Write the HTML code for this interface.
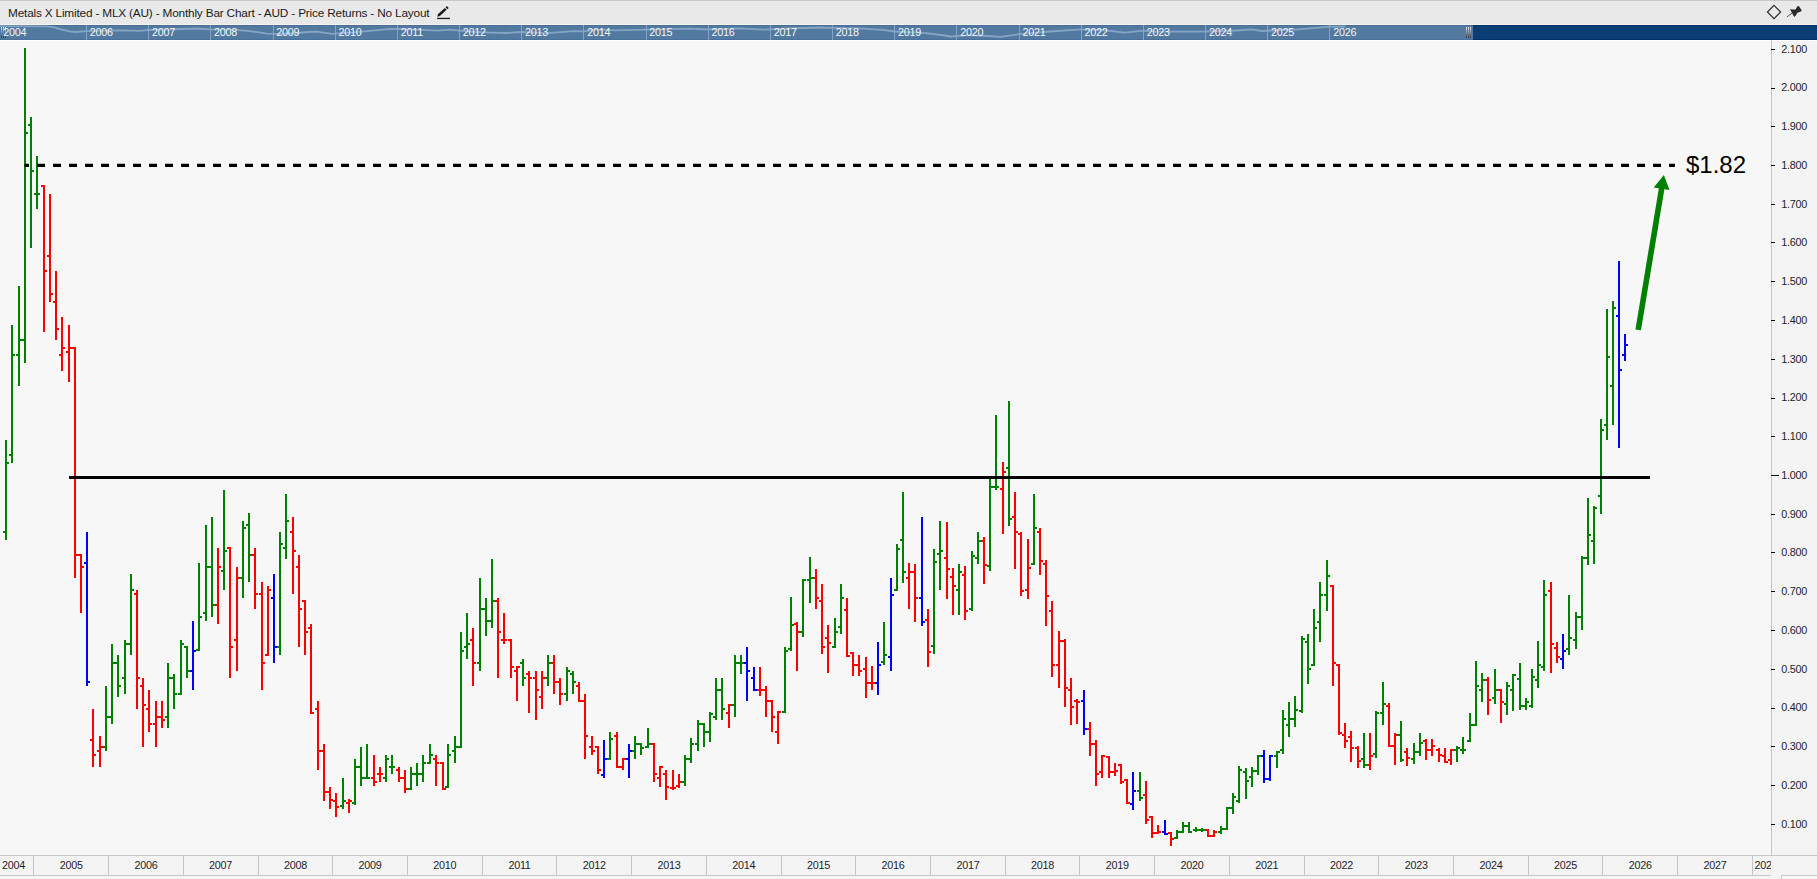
<!DOCTYPE html>
<html><head><meta charset="utf-8"><title>Metals X Limited - MLX (AU)</title>
<style>
html,body{margin:0;padding:0;}
body{width:1817px;height:879px;overflow:hidden;background:#f7f7f7;position:relative;font-family:"Liberation Sans",sans-serif;}
.abs{position:absolute;}
#topline{left:0;top:0;width:1817px;height:1px;background:#c9c9c9;}
#titlebar{left:0;top:1px;width:1817px;height:23px;background:#e9e9e9;}
#title{left:8px;top:6px;font-size:11.8px;line-height:15px;color:#1b1b1b;white-space:nowrap;letter-spacing:-0.18px;}
#tbline{left:0;top:24px;width:1817px;height:1px;background:#f7f3ec;}
#navl{left:0;top:25px;width:1473px;height:15px;background:#5279a0;box-shadow:inset 0 1px 0 #47709a, inset 0 -1px 0 #47709a;}
#navd{left:1473px;top:25px;width:344px;height:15px;background:#0b3e74;box-shadow:inset 0 1px 0 #013267, inset 0 -1px 0 #013267;}
#navw{left:0;top:40px;width:1817px;height:1px;background:#ffffff;}
#ypanel{left:1772px;top:41px;width:45px;height:838px;background:#f4f4f4;}
#xpanel{left:0;top:856px;width:1772px;height:23px;background:#f4f4f4;}
#botbox{left:1781px;top:875px;width:40px;height:10px;border:1px solid #c6c6c6;background:#f7f7f7;box-sizing:border-box;}
svg{position:absolute;left:0;top:0;}
svg text{font-family:"Liberation Sans",sans-serif;}
</style></head><body>
<div class="abs" id="topline"></div>
<div class="abs" id="titlebar"></div>
<div class="abs" id="title">Metals X Limited - MLX (AU) - Monthly Bar Chart - AUD - Price Returns - No Layout</div>
<div class="abs" id="tbline"></div>
<div class="abs" id="navl"></div>
<div class="abs" id="navd"></div>
<div class="abs" id="navw"></div>
<div class="abs" id="ypanel"></div>
<div class="abs" id="xpanel"></div>
<div class="abs" id="botbox"></div>
<svg width="1817" height="879" viewBox="0 0 1817 879">
<defs><linearGradient id="hg" x1="0" y1="0" x2="0" y2="1"><stop offset="0" stop-color="#e8eef5"/><stop offset="1" stop-color="#2a3440"/></linearGradient>
<clipPath id="xclip"><rect x="0" y="856" width="1771" height="20"/></clipPath></defs>
<g shape-rendering="crispEdges">
<rect x="1771" y="40" width="1" height="816" fill="#c6c6c6"/>
<rect x="0" y="855" width="1817" height="1" fill="#c6c6c6"/>
<rect x="0" y="875" width="1771" height="1" fill="#c6c6c6"/>
<rect x="33" y="856" width="1" height="19" fill="#c6c6c6"/><rect x="108" y="856" width="1" height="19" fill="#c6c6c6"/><rect x="183" y="856" width="1" height="19" fill="#c6c6c6"/><rect x="258" y="856" width="1" height="19" fill="#c6c6c6"/><rect x="332" y="856" width="1" height="19" fill="#c6c6c6"/><rect x="407" y="856" width="1" height="19" fill="#c6c6c6"/><rect x="482" y="856" width="1" height="19" fill="#c6c6c6"/><rect x="556" y="856" width="1" height="19" fill="#c6c6c6"/><rect x="631" y="856" width="1" height="19" fill="#c6c6c6"/><rect x="706" y="856" width="1" height="19" fill="#c6c6c6"/><rect x="781" y="856" width="1" height="19" fill="#c6c6c6"/><rect x="855" y="856" width="1" height="19" fill="#c6c6c6"/><rect x="930" y="856" width="1" height="19" fill="#c6c6c6"/><rect x="1005" y="856" width="1" height="19" fill="#c6c6c6"/><rect x="1079" y="856" width="1" height="19" fill="#c6c6c6"/><rect x="1154" y="856" width="1" height="19" fill="#c6c6c6"/><rect x="1229" y="856" width="1" height="19" fill="#c6c6c6"/><rect x="1304" y="856" width="1" height="19" fill="#c6c6c6"/><rect x="1378" y="856" width="1" height="19" fill="#c6c6c6"/><rect x="1453" y="856" width="1" height="19" fill="#c6c6c6"/><rect x="1528" y="856" width="1" height="19" fill="#c6c6c6"/><rect x="1602" y="856" width="1" height="19" fill="#c6c6c6"/><rect x="1677" y="856" width="1" height="19" fill="#c6c6c6"/><rect x="1752" y="856" width="1" height="19" fill="#c6c6c6"/>
<rect x="1771" y="824" width="4" height="1" fill="#111"/><rect x="1771" y="785" width="4" height="1" fill="#111"/><rect x="1771" y="746" width="4" height="1" fill="#111"/><rect x="1771" y="708" width="4" height="1" fill="#111"/><rect x="1771" y="669" width="4" height="1" fill="#111"/><rect x="1771" y="630" width="4" height="1" fill="#111"/><rect x="1771" y="591" width="4" height="1" fill="#111"/><rect x="1771" y="552" width="4" height="1" fill="#111"/><rect x="1771" y="514" width="4" height="1" fill="#111"/><rect x="1771" y="475" width="8" height="1" fill="#111"/><rect x="1771" y="436" width="4" height="1" fill="#111"/><rect x="1771" y="398" width="4" height="1" fill="#111"/><rect x="1771" y="359" width="4" height="1" fill="#111"/><rect x="1771" y="320" width="4" height="1" fill="#111"/><rect x="1771" y="281" width="4" height="1" fill="#111"/><rect x="1771" y="242" width="4" height="1" fill="#111"/><rect x="1771" y="204" width="4" height="1" fill="#111"/><rect x="1771" y="165" width="4" height="1" fill="#111"/><rect x="1771" y="126" width="4" height="1" fill="#111"/><rect x="1771" y="88" width="4" height="1" fill="#111"/><rect x="1771" y="49" width="4" height="1" fill="#111"/>
<rect x="86" y="25" width="1" height="15" fill="#86a2c0"/><rect x="148" y="25" width="1" height="15" fill="#86a2c0"/><rect x="210" y="25" width="1" height="15" fill="#86a2c0"/><rect x="273" y="25" width="1" height="15" fill="#86a2c0"/><rect x="335" y="25" width="1" height="15" fill="#86a2c0"/><rect x="397" y="25" width="1" height="15" fill="#86a2c0"/><rect x="459" y="25" width="1" height="15" fill="#86a2c0"/><rect x="521" y="25" width="1" height="15" fill="#86a2c0"/><rect x="583" y="25" width="1" height="15" fill="#86a2c0"/><rect x="646" y="25" width="1" height="15" fill="#86a2c0"/><rect x="708" y="25" width="1" height="15" fill="#86a2c0"/><rect x="770" y="25" width="1" height="15" fill="#86a2c0"/><rect x="832" y="25" width="1" height="15" fill="#86a2c0"/><rect x="894" y="25" width="1" height="15" fill="#86a2c0"/><rect x="956" y="25" width="1" height="15" fill="#86a2c0"/><rect x="1019" y="25" width="1" height="15" fill="#86a2c0"/><rect x="1081" y="25" width="1" height="15" fill="#86a2c0"/><rect x="1143" y="25" width="1" height="15" fill="#86a2c0"/><rect x="1205" y="25" width="1" height="15" fill="#86a2c0"/><rect x="1267" y="25" width="1" height="15" fill="#86a2c0"/><rect x="1329" y="25" width="1" height="15" fill="#86a2c0"/>
<rect x="1466" y="27" width="1" height="11" fill="url(#hg)"/><rect x="1468" y="27" width="1" height="11" fill="url(#hg)"/><rect x="1470" y="27" width="1" height="11" fill="url(#hg)"/>
<rect x="1" y="27" width="1" height="11" fill="url(#hg)"/><rect x="3" y="27" width="1" height="11" fill="url(#hg)"/><rect x="5" y="27" width="1" height="11" fill="url(#hg)"/>
</g>
<polyline points="-1.8,26.2 46.7,26.3 54.2,27.4 61.6,29.6 69.7,31.4 75.9,32.0 86.5,31.2 105.2,30.6 123.8,30.4 139.3,30.8 148.7,30.0 167.3,29.6 182.9,29.0 195.3,28.5 210.8,29.4 229.5,29.6 245.0,30.6 257.5,32.2 266.8,33.6 279.2,34.0 297.9,33.0 307.2,32.0 316.5,31.7 332.1,33.8 341.4,33.2 353.8,32.4 372.5,30.6 391.1,28.8 397.4,29.0 416.0,29.6 437.8,30.6 450.2,29.6 459.5,30.6 475.1,32.0 490.6,32.6 506.1,33.0 521.7,32.0 546.6,33.2 574.5,31.2 583.9,31.4 596.3,29.6 614.9,30.3 646.0,29.6 670.9,29.2 689.5,28.6 708.2,29.5 739.3,28.3 764.2,29.7 789.0,28.5 820.1,27.5 832.5,27.8 863.6,28.6 882.3,29.8 894.7,31.5 925.8,33.1 941.3,35.0 950.7,36.5 969.3,35.2 988.0,36.0 1000.4,36.8 1019.1,34.2 1050.1,31.5 1081.2,29.3 1106.1,30.5 1124.7,32.7 1143.4,30.6 1155.8,31.6 1205.6,31.5 1236.6,30.5 1252.2,29.4 1261.5,31.0 1270.8,30.5 1298.8,29.3 1329.9,26.6 1345.4,26.5" fill="none" stroke="#8ca8c6" stroke-width="1.8" stroke-linejoin="round" opacity="0.9"/>
<g font-size="10.8" letter-spacing="-0.25" fill="#f4f7fa"><text x="89.8" y="36.3">2006</text><text x="152.0" y="36.3">2007</text><text x="214.1" y="36.3">2008</text><text x="276.3" y="36.3">2009</text><text x="338.5" y="36.3">2010</text><text x="400.7" y="36.3">2011</text><text x="462.8" y="36.3">2012</text><text x="525.0" y="36.3">2013</text><text x="587.2" y="36.3">2014</text><text x="649.3" y="36.3">2015</text><text x="711.5" y="36.3">2016</text><text x="773.7" y="36.3">2017</text><text x="835.8" y="36.3">2018</text><text x="898.0" y="36.3">2019</text><text x="960.2" y="36.3">2020</text><text x="1022.4" y="36.3">2021</text><text x="1084.5" y="36.3">2022</text><text x="1146.7" y="36.3">2023</text><text x="1208.9" y="36.3">2024</text><text x="1271.0" y="36.3">2025</text><text x="1333.2" y="36.3">2026</text><text x="3.2" y="36.3">2004</text></g>
<g font-size="10.8" letter-spacing="-0.25" fill="#1d1d2b"><text x="1807" y="827.6" text-anchor="end">0.100</text><text x="1807" y="788.9" text-anchor="end">0.200</text><text x="1807" y="750.1" text-anchor="end">0.300</text><text x="1807" y="711.4" text-anchor="end">0.400</text><text x="1807" y="672.6" text-anchor="end">0.500</text><text x="1807" y="633.9" text-anchor="end">0.600</text><text x="1807" y="595.1" text-anchor="end">0.700</text><text x="1807" y="556.4" text-anchor="end">0.800</text><text x="1807" y="517.6" text-anchor="end">0.900</text><text x="1807" y="478.9" text-anchor="end">1.000</text><text x="1807" y="440.1" text-anchor="end">1.100</text><text x="1807" y="401.4" text-anchor="end">1.200</text><text x="1807" y="362.6" text-anchor="end">1.300</text><text x="1807" y="323.9" text-anchor="end">1.400</text><text x="1807" y="285.1" text-anchor="end">1.500</text><text x="1807" y="246.4" text-anchor="end">1.600</text><text x="1807" y="207.7" text-anchor="end">1.700</text><text x="1807" y="168.9" text-anchor="end">1.800</text><text x="1807" y="130.2" text-anchor="end">1.900</text><text x="1807" y="91.4" text-anchor="end">2.000</text><text x="1807" y="52.6" text-anchor="end">2.100</text></g>
<g font-size="10.8" letter-spacing="-0.25" fill="#1d1d2b" clip-path="url(#xclip)"><text x="71.2" y="869" text-anchor="middle">2005</text><text x="145.9" y="869" text-anchor="middle">2006</text><text x="220.6" y="869" text-anchor="middle">2007</text><text x="295.4" y="869" text-anchor="middle">2008</text><text x="370.1" y="869" text-anchor="middle">2009</text><text x="444.8" y="869" text-anchor="middle">2010</text><text x="519.5" y="869" text-anchor="middle">2011</text><text x="594.2" y="869" text-anchor="middle">2012</text><text x="669.0" y="869" text-anchor="middle">2013</text><text x="743.7" y="869" text-anchor="middle">2014</text><text x="818.4" y="869" text-anchor="middle">2015</text><text x="893.1" y="869" text-anchor="middle">2016</text><text x="967.9" y="869" text-anchor="middle">2017</text><text x="1042.6" y="869" text-anchor="middle">2018</text><text x="1117.3" y="869" text-anchor="middle">2019</text><text x="1192.0" y="869" text-anchor="middle">2020</text><text x="1266.7" y="869" text-anchor="middle">2021</text><text x="1341.4" y="869" text-anchor="middle">2022</text><text x="1416.2" y="869" text-anchor="middle">2023</text><text x="1490.9" y="869" text-anchor="middle">2024</text><text x="1565.6" y="869" text-anchor="middle">2025</text><text x="1640.3" y="869" text-anchor="middle">2026</text><text x="1715.0" y="869" text-anchor="middle">2027</text><text x="2" y="869">2004</text><text x="1754.4" y="869">2028</text></g>
<g shape-rendering="crispEdges"><path fill="#008000" d="M5 440h2V540h-2zM3 531h2v2h-2zM7 462h2v2h-2zM11 325h2V463h-2zM9 454h2v2h-2zM13 354h2v2h-2zM18 286h2V386h-2zM16 354h2v2h-2zM20 339h2v2h-2zM24 48h2V363h-2zM22 339h2v2h-2zM26 132h2v2h-2zM30 117h2V248h-2zM28 124h2v2h-2zM32 170h2v2h-2zM36 156h2V209h-2zM34 193h2v2h-2zM38 193h2v2h-2zM105 686h2V751h-2zM103 746h2v2h-2zM107 716h2v2h-2zM111 644h2V724h-2zM109 716h2v2h-2zM113 662h2v2h-2zM117 655h2V697h-2zM115 662h2v2h-2zM119 685h2v2h-2zM124 640h2V694h-2zM122 677h2v2h-2zM126 643h2v2h-2zM130 574h2V655h-2zM128 643h2v2h-2zM132 589h2v2h-2zM167 663h2V728h-2zM165 716h2v2h-2zM169 677h2v2h-2zM173 674h2V709h-2zM171 677h2v2h-2zM175 693h2v2h-2zM180 640h2V695h-2zM178 693h2v2h-2zM182 643h2v2h-2zM186 646h2V678h-2zM184 646h2v2h-2zM188 670h2v2h-2zM198 563h2V651h-2zM196 649h2v2h-2zM200 616h2v2h-2zM205 525h2V621h-2zM203 612h2v2h-2zM207 566h2v2h-2zM211 517h2V617h-2zM209 566h2v2h-2zM213 604h2v2h-2zM223 490h2V590h-2zM221 570h2v2h-2zM225 550h2v2h-2zM242 521h2V598h-2zM240 577h2v2h-2zM244 527h2v2h-2zM248 513h2V582h-2zM246 524h2v2h-2zM250 554h2v2h-2zM279 532h2V655h-2zM277 646h2v2h-2zM281 543h2v2h-2zM285 494h2V559h-2zM283 547h2v2h-2zM287 520h2v2h-2zM342 778h2V809h-2zM340 805h2v2h-2zM344 800h2v2h-2zM354 759h2V805h-2zM352 802h2v2h-2zM356 766h2v2h-2zM360 747h2V786h-2zM358 766h2v2h-2zM362 777h2v2h-2zM366 744h2V779h-2zM364 777h2v2h-2zM368 777h2v2h-2zM385 755h2V782h-2zM383 777h2v2h-2zM387 758h2v2h-2zM391 755h2V774h-2zM389 766h2v2h-2zM393 766h2v2h-2zM410 767h2V790h-2zM408 788h2v2h-2zM412 773h2v2h-2zM416 763h2V786h-2zM414 773h2v2h-2zM418 773h2v2h-2zM422 755h2V782h-2zM420 773h2v2h-2zM424 762h2v2h-2zM429 744h2V764h-2zM427 762h2v2h-2zM431 754h2v2h-2zM447 744h2V788h-2zM445 786h2v2h-2zM449 754h2v2h-2zM454 736h2V763h-2zM452 750h2v2h-2zM456 746h2v2h-2zM460 632h2V748h-2zM458 746h2v2h-2zM462 650h2v2h-2zM466 613h2V659h-2zM464 646h2v2h-2zM468 643h2v2h-2zM479 578h2V671h-2zM477 662h2v2h-2zM481 608h2v2h-2zM485 598h2V636h-2zM483 608h2v2h-2zM487 620h2v2h-2zM491 559h2V628h-2zM489 620h2v2h-2zM493 600h2v2h-2zM522 659h2V686h-2zM520 662h2v2h-2zM524 677h2v2h-2zM547 655h2V686h-2zM545 677h2v2h-2zM549 662h2v2h-2zM566 667h2V701h-2zM564 693h2v2h-2zM568 670h2v2h-2zM572 671h2V694h-2zM570 673h2v2h-2zM574 681h2v2h-2zM609 732h2V760h-2zM607 758h2v2h-2zM611 738h2v2h-2zM634 736h2V759h-2zM632 750h2v2h-2zM636 743h2v2h-2zM640 743h2V755h-2zM638 743h2v2h-2zM642 747h2v2h-2zM647 728h2V748h-2zM645 746h2v2h-2zM649 743h2v2h-2zM684 755h2V786h-2zM682 781h2v2h-2zM686 758h2v2h-2zM690 738h2V763h-2zM688 758h2v2h-2zM692 743h2v2h-2zM697 720h2V751h-2zM695 743h2v2h-2zM699 723h2v2h-2zM703 723h2V747h-2zM701 723h2v2h-2zM705 731h2v2h-2zM709 712h2V742h-2zM707 731h2v2h-2zM711 713h2v2h-2zM715 678h2V720h-2zM713 716h2v2h-2zM717 689h2v2h-2zM721 678h2V720h-2zM719 689h2v2h-2zM723 708h2v2h-2zM734 655h2V717h-2zM732 704h2v2h-2zM736 662h2v2h-2zM740 655h2V674h-2zM738 662h2v2h-2zM742 662h2v2h-2zM784 647h2V713h-2zM782 711h2v2h-2zM786 650h2v2h-2zM790 597h2V651h-2zM788 648h2v2h-2zM792 624h2v2h-2zM802 579h2V637h-2zM800 631h2v2h-2zM804 579h2v2h-2zM809 557h2V603h-2zM807 579h2v2h-2zM811 577h2v2h-2zM834 618h2V648h-2zM832 646h2v2h-2zM836 631h2v2h-2zM840 584h2V634h-2zM838 626h2v2h-2zM842 597h2v2h-2zM883 622h2V665h-2zM881 661h2v2h-2zM885 654h2v2h-2zM896 544h2V591h-2zM894 589h2v2h-2zM898 548h2v2h-2zM902 492h2V583h-2zM900 539h2v2h-2zM904 571h2v2h-2zM933 549h2V654h-2zM931 645h2v2h-2zM935 561h2v2h-2zM939 521h2V590h-2zM937 553h2v2h-2zM941 550h2v2h-2zM958 564h2V615h-2zM956 589h2v2h-2zM960 571h2v2h-2zM971 551h2V611h-2zM969 608h2v2h-2zM973 555h2v2h-2zM977 532h2V564h-2zM975 557h2v2h-2zM979 540h2v2h-2zM989 479h2V571h-2zM987 565h2v2h-2zM991 486h2v2h-2zM995 415h2V490h-2zM993 486h2v2h-2zM997 486h2v2h-2zM1008 401h2V526h-2zM1006 467h2v2h-2zM1010 518h2v2h-2zM1033 494h2V565h-2zM1031 563h2v2h-2zM1035 527h2v2h-2zM1139 772h2V801h-2zM1137 790h2v2h-2zM1141 797h2v2h-2zM1176 830h2V839h-2zM1174 837h2v2h-2zM1178 831h2v2h-2zM1182 822h2V833h-2zM1180 831h2v2h-2zM1184 825h2v2h-2zM1188 822h2V833h-2zM1186 825h2v2h-2zM1190 831h2v2h-2zM1195 827h2V832h-2zM1193 829h2v2h-2zM1197 829h2v2h-2zM1201 828h2V832h-2zM1199 829h2v2h-2zM1203 829h2v2h-2zM1220 826h2V834h-2zM1218 831h2v2h-2zM1222 828h2v2h-2zM1226 807h2V830h-2zM1224 828h2v2h-2zM1228 807h2v2h-2zM1232 793h2V814h-2zM1230 807h2v2h-2zM1234 796h2v2h-2zM1238 766h2V803h-2zM1236 800h2v2h-2zM1240 769h2v2h-2zM1245 768h2V799h-2zM1243 771h2v2h-2zM1247 780h2v2h-2zM1251 767h2V787h-2zM1249 776h2v2h-2zM1253 770h2v2h-2zM1257 755h2V775h-2zM1255 770h2v2h-2zM1259 755h2v2h-2zM1276 751h2V768h-2zM1274 755h2v2h-2zM1278 751h2v2h-2zM1282 710h2V754h-2zM1280 749h2v2h-2zM1284 718h2v2h-2zM1288 702h2V737h-2zM1286 724h2v2h-2zM1290 718h2v2h-2zM1294 696h2V727h-2zM1292 718h2v2h-2zM1296 709h2v2h-2zM1301 636h2V713h-2zM1299 710h2v2h-2zM1303 638h2v2h-2zM1307 634h2V684h-2zM1305 641h2v2h-2zM1309 668h2v2h-2zM1313 609h2V666h-2zM1311 664h2v2h-2zM1315 627h2v2h-2zM1319 582h2V642h-2zM1317 621h2v2h-2zM1321 594h2v2h-2zM1326 560h2V611h-2zM1324 594h2v2h-2zM1328 575h2v2h-2zM1363 733h2V768h-2zM1361 758h2v2h-2zM1365 764h2v2h-2zM1375 711h2V758h-2zM1373 753h2v2h-2zM1377 712h2v2h-2zM1382 682h2V725h-2zM1380 712h2v2h-2zM1384 703h2v2h-2zM1400 721h2V762h-2zM1398 734h2v2h-2zM1402 759h2v2h-2zM1413 743h2V764h-2zM1411 758h2v2h-2zM1415 751h2v2h-2zM1419 733h2V756h-2zM1417 751h2v2h-2zM1421 742h2v2h-2zM1456 746h2V762h-2zM1454 749h2v2h-2zM1458 747h2v2h-2zM1462 737h2V754h-2zM1460 749h2v2h-2zM1464 749h2v2h-2zM1469 713h2V742h-2zM1467 740h2v2h-2zM1471 724h2v2h-2zM1475 661h2V726h-2zM1473 724h2v2h-2zM1477 685h2v2h-2zM1481 673h2V702h-2zM1479 689h2v2h-2zM1483 679h2v2h-2zM1494 669h2V704h-2zM1492 697h2v2h-2zM1496 689h2v2h-2zM1506 682h2V715h-2zM1504 703h2v2h-2zM1508 685h2v2h-2zM1512 674h2V711h-2zM1510 689h2v2h-2zM1514 674h2v2h-2zM1519 663h2V710h-2zM1517 678h2v2h-2zM1521 705h2v2h-2zM1525 698h2V710h-2zM1523 705h2v2h-2zM1527 701h2v2h-2zM1531 669h2V708h-2zM1529 705h2v2h-2zM1533 676h2v2h-2zM1537 641h2V688h-2zM1535 679h2v2h-2zM1539 664h2v2h-2zM1543 580h2V671h-2zM1541 666h2v2h-2zM1545 594h2v2h-2zM1568 595h2V655h-2zM1566 648h2v2h-2zM1570 637h2v2h-2zM1575 612h2V649h-2zM1573 639h2v2h-2zM1577 616h2v2h-2zM1581 556h2V630h-2zM1579 616h2v2h-2zM1583 557h2v2h-2zM1587 498h2V565h-2zM1585 557h2v2h-2zM1589 534h2v2h-2zM1593 506h2V564h-2zM1591 540h2v2h-2zM1595 507h2v2h-2zM1600 419h2V514h-2zM1598 495h2v2h-2zM1602 429h2v2h-2zM1606 309h2V440h-2zM1604 424h2v2h-2zM1608 356h2v2h-2zM1612 301h2V425h-2zM1610 385h2v2h-2zM1614 307h2v2h-2z"/><path fill="#ff0000" d="M43 185h2V332h-2zM41 185h2v2h-2zM45 270h2v2h-2zM49 194h2V302h-2zM47 255h2v2h-2zM51 293h2v2h-2zM55 271h2V340h-2zM53 301h2v2h-2zM57 328h2v2h-2zM61 317h2V371h-2zM59 354h2v2h-2zM63 347h2v2h-2zM68 325h2V382h-2zM66 351h2v2h-2zM70 347h2v2h-2zM74 347h2V578h-2zM72 347h2v2h-2zM76 554h2v2h-2zM80 554h2V613h-2zM78 554h2v2h-2zM82 566h2v2h-2zM92 709h2V767h-2zM90 739h2v2h-2zM94 754h2v2h-2zM99 736h2V767h-2zM97 750h2v2h-2zM101 746h2v2h-2zM136 590h2V709h-2zM134 593h2v2h-2zM138 677h2v2h-2zM142 678h2V747h-2zM140 685h2v2h-2zM144 704h2v2h-2zM148 690h2V732h-2zM146 708h2v2h-2zM150 723h2v2h-2zM155 701h2V747h-2zM153 723h2v2h-2zM157 716h2v2h-2zM161 701h2V728h-2zM159 716h2v2h-2zM163 719h2v2h-2zM217 548h2V624h-2zM215 604h2v2h-2zM219 566h2v2h-2zM229 547h2V678h-2zM227 547h2v2h-2zM231 646h2v2h-2zM236 567h2V671h-2zM234 639h2v2h-2zM238 577h2v2h-2zM254 548h2V609h-2zM252 554h2v2h-2zM256 593h2v2h-2zM261 582h2V690h-2zM259 593h2v2h-2zM263 662h2v2h-2zM267 586h2V656h-2zM265 654h2v2h-2zM269 589h2v2h-2zM292 517h2V594h-2zM290 531h2v2h-2zM294 550h2v2h-2zM298 555h2V647h-2zM296 566h2v2h-2zM300 608h2v2h-2zM304 600h2V655h-2zM302 600h2v2h-2zM306 631h2v2h-2zM310 624h2V714h-2zM308 627h2v2h-2zM312 712h2v2h-2zM317 701h2V770h-2zM315 708h2v2h-2zM319 750h2v2h-2zM323 744h2V801h-2zM321 750h2v2h-2zM325 791h2v2h-2zM329 787h2V809h-2zM327 791h2v2h-2zM331 799h2v2h-2zM335 793h2V817h-2zM333 800h2v2h-2zM337 806h2v2h-2zM348 799h2V813h-2zM346 802h2v2h-2zM350 800h2v2h-2zM373 755h2V786h-2zM371 777h2v2h-2zM375 781h2v2h-2zM379 767h2V782h-2zM377 773h2v2h-2zM381 773h2v2h-2zM398 767h2V782h-2zM396 769h2v2h-2zM400 777h2v2h-2zM404 770h2V793h-2zM402 777h2v2h-2zM406 788h2v2h-2zM435 755h2V786h-2zM433 758h2v2h-2zM437 762h2v2h-2zM442 762h2V790h-2zM440 762h2v2h-2zM444 788h2v2h-2zM472 628h2V686h-2zM470 639h2v2h-2zM474 662h2v2h-2zM497 598h2V678h-2zM495 600h2v2h-2zM499 631h2v2h-2zM503 613h2V644h-2zM501 639h2v2h-2zM505 639h2v2h-2zM510 639h2V678h-2zM508 639h2v2h-2zM512 666h2v2h-2zM516 666h2V701h-2zM514 670h2v2h-2zM518 666h2v2h-2zM528 671h2V713h-2zM526 673h2v2h-2zM530 677h2v2h-2zM535 671h2V720h-2zM533 677h2v2h-2zM537 689h2v2h-2zM541 671h2V709h-2zM539 696h2v2h-2zM543 677h2v2h-2zM553 655h2V694h-2zM551 662h2v2h-2zM555 681h2v2h-2zM559 678h2V705h-2zM557 681h2v2h-2zM561 693h2v2h-2zM578 682h2V702h-2zM576 685h2v2h-2zM580 700h2v2h-2zM584 694h2V759h-2zM582 700h2v2h-2zM586 735h2v2h-2zM591 736h2V755h-2zM589 746h2v2h-2zM593 750h2v2h-2zM597 746h2V774h-2zM595 746h2v2h-2zM599 769h2v2h-2zM616 732h2V768h-2zM614 735h2v2h-2zM618 766h2v2h-2zM622 758h2V770h-2zM620 766h2v2h-2zM624 758h2v2h-2zM653 743h2V782h-2zM651 743h2v2h-2zM655 773h2v2h-2zM659 766h2V787h-2zM657 777h2v2h-2zM661 766h2v2h-2zM665 770h2V800h-2zM663 773h2v2h-2zM667 786h2v2h-2zM672 770h2V790h-2zM670 787h2v2h-2zM674 787h2v2h-2zM678 774h2V788h-2zM676 785h2v2h-2zM680 781h2v2h-2zM728 704h2V728h-2zM726 712h2v2h-2zM730 704h2v2h-2zM759 667h2V696h-2zM757 689h2v2h-2zM761 689h2v2h-2zM765 686h2V717h-2zM763 689h2v2h-2zM767 700h2v2h-2zM771 700h2V732h-2zM769 700h2v2h-2zM773 716h2v2h-2zM777 711h2V744h-2zM775 731h2v2h-2zM779 711h2v2h-2zM796 622h2V671h-2zM794 623h2v2h-2zM798 631h2v2h-2zM815 569h2V609h-2zM813 577h2v2h-2zM817 597h2v2h-2zM821 584h2V654h-2zM819 600h2v2h-2zM823 646h2v2h-2zM827 625h2V673h-2zM825 637h2v2h-2zM829 642h2v2h-2zM846 598h2V657h-2zM844 609h2v2h-2zM848 655h2v2h-2zM852 652h2V676h-2zM850 652h2v2h-2zM854 664h2v2h-2zM858 655h2V676h-2zM856 664h2v2h-2zM860 670h2v2h-2zM865 657h2V698h-2zM863 668h2v2h-2zM867 682h2v2h-2zM871 666h2V690h-2zM869 682h2v2h-2zM873 682h2v2h-2zM908 563h2V609h-2zM906 577h2v2h-2zM910 571h2v2h-2zM914 564h2V622h-2zM912 571h2v2h-2zM916 597h2v2h-2zM927 609h2V667h-2zM925 619h2v2h-2zM929 651h2v2h-2zM946 522h2V599h-2zM944 557h2v2h-2zM948 568h2v2h-2zM952 568h2V615h-2zM950 576h2v2h-2zM954 585h2v2h-2zM964 566h2V620h-2zM962 574h2v2h-2zM966 610h2v2h-2zM983 537h2V584h-2zM981 540h2v2h-2zM985 564h2v2h-2zM1002 462h2V534h-2zM1000 488h2v2h-2zM1004 471h2v2h-2zM1014 492h2V569h-2zM1012 516h2v2h-2zM1016 531h2v2h-2zM1020 532h2V596h-2zM1018 533h2v2h-2zM1022 590h2v2h-2zM1027 539h2V599h-2zM1025 589h2v2h-2zM1029 567h2v2h-2zM1039 528h2V575h-2zM1037 531h2v2h-2zM1041 560h2v2h-2zM1045 560h2V626h-2zM1043 563h2v2h-2zM1047 595h2v2h-2zM1051 601h2V677h-2zM1049 610h2v2h-2zM1053 664h2v2h-2zM1058 631h2V688h-2zM1056 664h2v2h-2zM1060 640h2v2h-2zM1064 639h2V707h-2zM1062 640h2v2h-2zM1066 687h2v2h-2zM1070 678h2V725h-2zM1068 689h2v2h-2zM1072 706h2v2h-2zM1076 699h2V724h-2zM1074 700h2v2h-2zM1078 701h2v2h-2zM1089 722h2V756h-2zM1087 728h2v2h-2zM1091 743h2v2h-2zM1095 740h2V786h-2zM1093 743h2v2h-2zM1097 773h2v2h-2zM1101 755h2V778h-2zM1099 771h2v2h-2zM1103 755h2v2h-2zM1108 756h2V778h-2zM1106 756h2v2h-2zM1110 771h2v2h-2zM1114 763h2V776h-2zM1112 771h2v2h-2zM1116 770h2v2h-2zM1120 764h2V784h-2zM1118 764h2v2h-2zM1122 781h2v2h-2zM1126 779h2V804h-2zM1124 779h2v2h-2zM1128 802h2v2h-2zM1145 781h2V824h-2zM1143 794h2v2h-2zM1147 819h2v2h-2zM1151 816h2V838h-2zM1149 816h2v2h-2zM1153 832h2v2h-2zM1157 825h2V834h-2zM1155 832h2v2h-2zM1159 831h2v2h-2zM1170 832h2V846h-2zM1168 832h2v2h-2zM1172 838h2v2h-2zM1207 829h2V837h-2zM1205 829h2v2h-2zM1209 835h2v2h-2zM1213 830h2V837h-2zM1211 835h2v2h-2zM1215 831h2v2h-2zM1332 585h2V686h-2zM1330 585h2v2h-2zM1334 662h2v2h-2zM1338 664h2V735h-2zM1336 664h2v2h-2zM1340 732h2v2h-2zM1344 723h2V748h-2zM1342 734h2v2h-2zM1346 740h2v2h-2zM1350 731h2V762h-2zM1348 736h2v2h-2zM1352 747h2v2h-2zM1357 746h2V768h-2zM1355 747h2v2h-2zM1359 760h2v2h-2zM1369 733h2V770h-2zM1367 764h2v2h-2zM1371 755h2v2h-2zM1388 703h2V747h-2zM1386 705h2v2h-2zM1390 745h2v2h-2zM1394 733h2V765h-2zM1392 745h2v2h-2zM1396 734h2v2h-2zM1406 748h2V766h-2zM1404 751h2v2h-2zM1408 757h2v2h-2zM1425 739h2V760h-2zM1423 740h2v2h-2zM1427 749h2v2h-2zM1431 739h2V756h-2zM1429 749h2v2h-2zM1433 745h2v2h-2zM1438 748h2V762h-2zM1436 749h2v2h-2zM1440 754h2v2h-2zM1444 748h2V763h-2zM1442 755h2v2h-2zM1446 761h2v2h-2zM1450 749h2V765h-2zM1448 759h2v2h-2zM1452 749h2v2h-2zM1487 677h2V715h-2zM1485 679h2v2h-2zM1489 699h2v2h-2zM1500 689h2V723h-2zM1498 689h2v2h-2zM1502 701h2v2h-2zM1550 582h2V673h-2zM1548 590h2v2h-2zM1552 643h2v2h-2zM1556 642h2V663h-2zM1554 647h2v2h-2zM1558 656h2v2h-2z"/><path fill="#0000ff" d="M86 532h2V686h-2zM84 562h2v2h-2zM88 681h2v2h-2zM192 621h2V690h-2zM190 670h2v2h-2zM194 650h2v2h-2zM273 574h2V663h-2zM271 597h2v2h-2zM275 646h2v2h-2zM603 740h2V778h-2zM601 774h2v2h-2zM605 758h2v2h-2zM628 744h2V778h-2zM626 758h2v2h-2zM630 750h2v2h-2zM746 647h2V701h-2zM744 662h2v2h-2zM748 670h2v2h-2zM753 667h2V691h-2zM751 677h2v2h-2zM755 689h2v2h-2zM877 642h2V695h-2zM875 682h2v2h-2zM879 664h2v2h-2zM890 578h2V671h-2zM888 656h2v2h-2zM892 594h2v2h-2zM921 517h2V626h-2zM919 597h2v2h-2zM923 621h2v2h-2zM1083 690h2V735h-2zM1081 700h2v2h-2zM1085 728h2v2h-2zM1132 772h2V810h-2zM1130 803h2v2h-2zM1134 790h2v2h-2zM1164 820h2V835h-2zM1162 831h2v2h-2zM1166 833h2v2h-2zM1263 750h2V783h-2zM1261 755h2v2h-2zM1265 778h2v2h-2zM1269 755h2V781h-2zM1267 778h2v2h-2zM1271 755h2v2h-2zM1562 634h2V669h-2zM1560 658h2v2h-2zM1564 650h2v2h-2zM1618 261h2V448h-2zM1616 315h2v2h-2zM1620 369h2v2h-2zM1624 334h2V361h-2zM1622 354h2v2h-2zM1626 344h2v2h-2z"/></g>
<line x1="24.5" y1="165.3" x2="1675" y2="165.3" stroke="#000" stroke-width="3.2" stroke-dasharray="8 8" stroke-dashoffset="3.5"/>
<line x1="69" y1="477.5" x2="1650" y2="477.5" stroke="#000" stroke-width="3.2"/>
<line x1="1638.2" y1="329.9" x2="1661.8" y2="187.7" stroke="#008000" stroke-width="5.6"/><polygon points="1663.9,175.1 1669.5,190.0 1653.7,187.4" fill="#008000"/>
<text x="1686" y="173" font-size="24" fill="#000">$1.82</text>
<!-- icons -->
<g fill="none" stroke="#2b2b2b" stroke-width="1.15"><path d="M1774 5.4L1780.6 12L1774 18.6L1767.4 12Z"/></g>
<g fill="#2b2b2b"><path d="M1790.0 9.2L1792.8 9.6L1795.5 9.4L1797.6 5.9L1799.0 6.3L1801.8 10.6L1801.2 11.3L1797.0 13.1L1796.2 15.0L1794.2 17.0Z"/><path d="M1787.1 16.8L1792.2 13.0" stroke="#2b2b2b" stroke-width="0.8"/></g>
<g fill="#1b1b1b"><rect x="437.1" y="17.8" width="12.9" height="1.3"/><path d="M437.2 16.7L438.09 14.12L444.86 7.89L446.62 9.80L439.85 16.03Z"/><path d="M445.59 7.21L446.92 5.99L448.68 7.91L447.35 9.13Z"/></g>
</svg>
</body></html>
